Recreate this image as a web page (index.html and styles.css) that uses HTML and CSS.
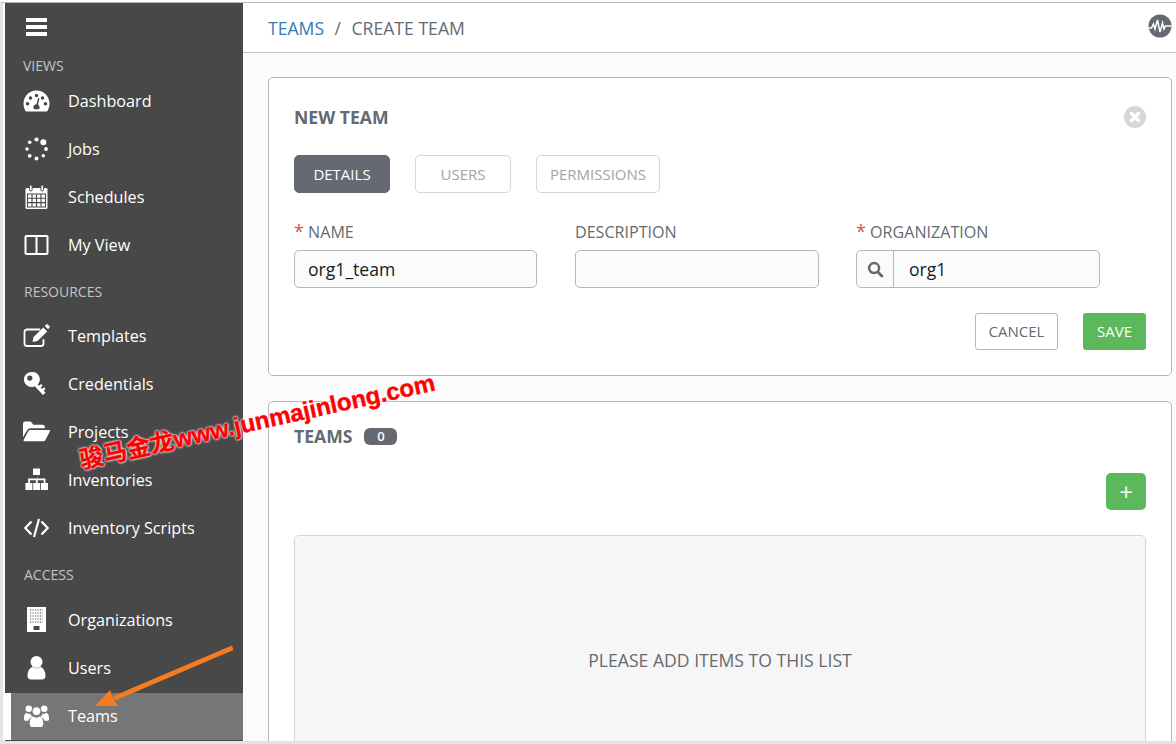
FILE: index.html
```html
<!DOCTYPE html>
<html lang="en">
<head>
  <meta charset="UTF-8">
  <meta name="viewport" content="width=device-width, initial-scale=1.0">
  <title>Teams</title>
  <link rel="stylesheet" href="styles.css">
</head>
<body>
  <div class="frame">
    <aside class="sidebar">
      <div class="burger"><span></span><span></span><span></span></div>

      <div class="nav-head nav-head-views">VIEWS</div>
      <a class="nav-item">
        <svg class="nav-icon" viewBox="0 0 26 20"><path fill="#fff" fill-rule="evenodd" d="M13 0C6 0 .5 5.500.5 12.500c0 2.500.6 4.700 1.800 6.800.2.400.6.700 1.100.700h19.200c.5 0 .9-.3 1.100-.7 1.200-2.100 1.800-4.300 1.800-6.800C25.500 5.500 20 0 13 0zM13 3a1.700 1.700 0 1 1 0 3.400A1.700 1.700 0 0 1 13 3zM7.200 5.400a1.700 1.700 0 1 1 0 3.400 1.700 1.700 0 0 1 0-3.400zM4.400 11a1.700 1.700 0 1 1 0 3.400 1.700 1.700 0 0 1 0-3.400zM21.600 11a1.700 1.700 0 1 1 0 3.400 1.700 1.700 0 0 1 0-3.400zM18.800 5.400a1.700 1.700 0 1 1 0 3.400 1.700 1.700 0 0 1 0-3.400zM15.800 7.300l-1.300 6.300c1 .6 1.500 1.500 1.500 2.500 0 .7-.2 1.300-.6 1.900h-4.800c-.4-.6-.6-1.200-.6-1.900 0-1.600 1.300-2.900 3-2.900l1.500-6.200z"/></svg>
        <span>Dashboard</span>
      </a>
      <a class="nav-item">
        <svg class="nav-icon" viewBox="0 0 26 26" fill="#fff"><circle cx="13" cy="3.500" r="2.100"/><circle cx="19.800" cy="6.200" r="3"/><circle cx="22.500" cy="13" r="1.900"/><circle cx="19.800" cy="19.800" r="1.700"/><circle cx="13" cy="22.500" r="2"/><circle cx="6.200" cy="19.800" r="1.900"/><circle cx="3.500" cy="13" r="1.700"/><circle cx="6.200" cy="6.200" r="1.800"/></svg>
        <span>Jobs</span>
      </a>
      <a class="nav-item">
        <svg class="nav-icon" viewBox="0 0 26 26"><rect x="2" y="4" width="22" height="21" rx="1.500" fill="#fff"/><rect x="6" y="1" width="2.600" height="6" rx="1.300" fill="#fff" stroke="#484848"/><rect x="17.400" y="1" width="2.600" height="6" rx="1.300" fill="#fff" stroke="#484848"/><path stroke="#484848" stroke-width="1.100" fill="none" d="M4 10h18v13H4zM4 14.300h18M4 18.600h18M8.500 10v13M13 10v13M17.500 10v13"/></svg>
        <span>Schedules</span>
      </a>
      <a class="nav-item">
        <svg class="nav-icon" viewBox="0 0 26 26"><path fill="none" stroke="#fff" stroke-width="2" d="M3 4h20a1 1 0 0 1 1 1v16a1 1 0 0 1-1 1H3a1 1 0 0 1-1-1V5a1 1 0 0 1 1-1zM13 4v18"/></svg>
        <span>My View</span>
      </a>

      <div class="nav-head nav-head-resources">RESOURCES</div>
      <a class="nav-item">
        <svg class="nav-icon" viewBox="0 0 26 26"><path fill="none" stroke="#fff" stroke-width="1.800" stroke-linecap="round" d="M20 17v3.500a2.500 2.500 0 0 1-2.500 2.500H3.500A2.500 2.500 0 0 1 1 20.500V9a2.500 2.500 0 0 1 2.500-2.500H16"/><path fill="#fff" d="M19.800 4.500l3.900 3.900L14 18l-5 1 1-5zM21.300 3l1.200-1.200c.6-.6 1.400-.6 2 0l1.200 1.200c.6.600.6 1.400 0 2L24.500 6.200z"/></svg>
        <span>Templates</span>
      </a>
      <a class="nav-item">
        <svg class="nav-icon" viewBox="0 0 26 26"><path fill="#fff" fill-rule="evenodd" d="M8 1a7.500 7.500 0 1 0 3.300 14.200l8.200 8.800 2.500-2.300-1.800-2 1.800-1.700-1.500-1.700-2 1.700-1.400-1.500 2-1.800-1.600-1.700-2 1.800-1.200-1.300A7.500 7.500 0 0 0 8 1zM6.300 4.500a2.600 2.600 0 1 1 0 5.200 2.600 2.600 0 0 1 0-5.200z"/></svg>
        <span>Credentials</span>
      </a>
      <a class="nav-item">
        <svg class="nav-icon" viewBox="0 0 26 22"><path fill="#fff" d="M0 3a2 2 0 0 1 2-2h5.500l2.500 3h9a2 2 0 0 1 2 2v1.500H7a3.500 3.500 0 0 0-3 1.700L0 16zM7 9h18c.8 0 1.200.8.800 1.500l-4.300 8.500a2 2 0 0 1-1.800 1H1.500c-.8 0-1.200-.8-.8-1.500L5.200 10A2 2 0 0 1 7 9z"/></svg>
        <span>Projects</span>
      </a>
      <a class="nav-item">
        <svg class="nav-icon" viewBox="0 0 26 26"><path fill="#fff" d="M9.500 1.500h7v6.500h-2.300v3.500H22v4.500h2.500V23h-7v-7h2.700v-2.700h-6V16h2.500v7h-7v-7h2.700v-2.700h-6V16h2.500v7h-7v-7h2.700v-4.500h9.800V8H9.500z"/></svg>
        <span>Inventories</span>
      </a>
      <a class="nav-item">
        <svg class="nav-icon" viewBox="0 0 26 26"><path fill="none" stroke="#fff" stroke-width="2.200" d="M8 6.500L1.800 13 8 19.500M18 6.500l6.200 6.500-6.200 6.500M15.500 4l-5 18"/></svg>
        <span>Inventory Scripts</span>
      </a>

      <div class="nav-head nav-head-access">ACCESS</div>
      <a class="nav-item">
        <svg class="nav-icon" viewBox="0 0 26 26"><rect x="3.500" y="0" width="19" height="25" fill="#fff"/><path stroke="#484848" stroke-width="1.200" stroke-dasharray="1.200 1.300" fill="none" d="M6.500 3h13M6.500 6h13M6.500 9h13M6.500 12h13M6.500 15h13"/><rect x="10" y="19" width="6" height="4" fill="#484848"/></svg>
        <span>Organizations</span>
      </a>
      <a class="nav-item">
        <svg class="nav-icon" viewBox="0 0 26 26"><circle cx="13" cy="7" r="6" fill="#fff"/><path fill="#fff" d="M4 21c0-5 2.500-9 5.500-9 1 .8 2.200 1.300 3.500 1.300s2.500-.5 3.500-1.300c3 0 5.500 4 5.500 9 0 2.200-1.400 3.500-3.300 3.500H7.300C5.400 24.500 4 23.200 4 21z"/></svg>
        <span>Users</span>
      </a>
      <a class="nav-item nav-item-active">
        <svg class="nav-icon" viewBox="0 0 28 26" fill="#fff"><circle cx="6" cy="5.500" r="3.400"/><circle cx="22" cy="5.500" r="3.400"/><circle cx="14" cy="8" r="4.600" stroke="#767676"/><path d="M1 16c0-3.500.8-6 3-6 .6.500 1.300.8 2.200.8.500 0 1 0 1.500-.3.300 1.400 1 2.600 2 3.300-2.300.9-3.500 2.200-4 4.200H3c-1.200 0-2-.8-2-2zM27 16c0-3.500-.8-6-3-6-.6.500-1.300.8-2.200.8-.5 0-1 0-1.500-.3-.3 1.400-1 2.600-2 3.300 2.300.9 3.500 2.200 4 4.200H25c1.200 0 2-.8 2-2z"/><path d="M7 21c0-4.500 1.500-7.500 3.700-7.500 1 .8 2.100 1.200 3.300 1.200s2.300-.4 3.300-1.200C19.500 13.500 21 16.500 21 21c0 2.200-1.100 3.500-2.800 3.500H9.800C8.100 24.500 7 23.200 7 21z"/></svg>
        <span>Teams</span>
      </a>
    </aside>

    <main class="content">
      <header class="topbar">
        <div class="crumbs"><a class="crumb-link">TEAMS</a><span class="crumb-sep">/</span><span>CREATE TEAM</span></div>
        <svg class="activity" viewBox="0 0 24 24"><circle cx="12" cy="12" r="11.500" fill="#646972"/><path fill="none" stroke="#fff" stroke-width="1.500" d="M0.500 14h3l2-4 1.500 5 2.500-9 2.500 12 2.500-9 1.500 6 1.500-3h6"/></svg>
      </header>

      <div class="panels">
        <section class="panel panel-form">
          <div class="panel-head">
            <h2 class="panel-title">NEW TEAM</h2>
            <svg class="close" viewBox="0 0 22 22"><circle cx="11" cy="11" r="11" fill="#d7d7d7"/><path stroke="#fff" stroke-width="3.400" stroke-linecap="round" d="M7.500 7.500l7 7M14.500 7.500l-7 7"/></svg>
          </div>
          <div class="tabs">
            <a class="tab tab-active tab-details">DETAILS</a>
            <a class="tab tab-users">USERS</a>
            <a class="tab tab-perms">PERMISSIONS</a>
          </div>
          <div class="fields">
            <div class="field">
              <label><span class="req">*</span> NAME</label>
              <div class="input">org1_team</div>
            </div>
            <div class="field">
              <label>DESCRIPTION</label>
              <div class="input"></div>
            </div>
            <div class="field field-org">
              <label><span class="req">*</span> ORGANIZATION</label>
              <div class="input input-lookup">
                <span class="lookup-btn"><svg viewBox="0 0 18 18" width="17" height="17"><circle cx="7.500" cy="7.500" r="5.300" fill="none" stroke="#646972" stroke-width="2.600"/><path stroke="#646972" stroke-width="3" stroke-linecap="round" d="M11.800 11.800l4 4"/></svg></span>
                <span class="lookup-val">org1</span>
              </div>
            </div>
          </div>
          <div class="actions">
            <a class="btn btn-cancel">CANCEL</a>
            <a class="btn btn-save">SAVE</a>
          </div>
        </section>

        <section class="panel panel-list">
          <div class="list-head">
            <h2 class="panel-title">TEAMS</h2>
            <span class="badge">0</span>
          </div>
          <div class="list-tools"><a class="btn-add">+</a></div>
          <div class="empty">PLEASE ADD ITEMS TO THIS LIST</div>
        </section>
      </div>
    </main>
  </div>

  <!-- pasted over the screenshot -->
  <div class="stamp">骏马金龙www.junmajinlong.com</div>
  <svg class="arrow" viewBox="0 0 150 70" width="150" height="70"><path fill="#f57c20" stroke="#f57c20" stroke-width="1.600" stroke-linejoin="round" d="M141.500 3.500L24.400 53.600 25.600 56.400 142.500 6.500z"/><path fill="#f57c20" d="M5 63L20 47l3 8 5 8z"/></svg>
</body>
</html>
```

FILE: styles.css
```css
* {
  box-sizing: border-box;
}

html, body {
  height: 100%;
}

body {
  margin: 0;
  height: 744px;
  overflow: hidden;
  background-color: #fff;
  font-family: 'Open Sans', 'Noto Sans', sans-serif;
  color: #646972;
  position: relative;
}

.frame {
  display: flex;
  height: 742px;
  margin-top: 2px;
  border-top: 1px solid #b7b7b7;
  border-bottom: 3px solid #e4e4e4;
  border-left: 3px solid #e4e4e4;
  padding-left: 2px;
}

/* sidebar */
.sidebar {
  width: 238px;
  flex-shrink: 0;
  background-color: #484848;
  color: #fff;
  overflow: hidden;
}

.burger {
  margin: 15px 0 0 21px;
  width: 21px;
  height: 18px;
  display: flex;
  flex-direction: column;
  justify-content: space-between;
}

.burger span {
  display: block;
  height: 4px;
  background-color: #fff;
}

.nav-head {
  font-size: 14px;
  line-height: 19px;
  color: #c4c4c4;
  padding-left: 18px;
}

.nav-head-views {
  margin-top: 20px;
  margin-bottom: 2px;
}

.nav-head-resources {
  margin-top: 13px;
  margin-bottom: 11px;
  padding-left: 19px;
}

.nav-head-access {
  margin-top: 13px;
  margin-bottom: 12px;
  padding-left: 19px;
}

.nav-item {
  display: flex;
  align-items: center;
  height: 48px;
  font-size: 16.200px;
  color: #fff;
  padding-left: 18px;
}

.nav-icon {
  width: 27px;
  height: 26px;
  flex-shrink: 0;
  margin-right: 18px;
}

.nav-item-active {
  height: 47px;
  margin-top: 1px;
  background-color: #767676;
  border-left: 6px solid #fff;
  padding-left: 12px;
  padding-bottom: 1px;
}

/* main */
.content {
  flex: 1;
  min-width: 0;
  background-color: #fbfbfb;
  display: flex;
  flex-direction: column;
}

.topbar {
  height: 50px;
  flex-shrink: 0;
  background-color: #fff;
  border-bottom: 1px solid #c4c4c4;
  display: flex;
  align-items: center;
  justify-content: space-between;
  padding: 0 4px 0 25px;
}

.crumbs {
  font-size: 17.600px;
  color: #646972;
}

.crumb-link {
  color: #337ab7;
}

.crumb-sep {
  margin: 0 10.500px;
}

.activity {
  width: 24px;
  height: 24px;
  margin-bottom: 4px;
}

.panels {
  flex: 1;
  padding: 24px 4px 0 25px;
  overflow: hidden;
}

.panel {
  background-color: #fff;
  border: 1px solid #b7b7b7;
  border-radius: 5px;
  padding: 0 25px;
}

.panel-form {
  height: 299px;
  margin-bottom: 25px;
}

.panel-list {
  height: 400px;
}

.panel-head {
  display: flex;
  justify-content: space-between;
  align-items: center;
  padding-top: 13px;
  height: 65px;
}

.panel-title {
  margin: 0;
  font-size: 17.600px;
  line-height: 24px;
  font-weight: 700;
  color: #646972;
}

.close {
  width: 22px;
  height: 22px;
}

.tabs {
  display: flex;
  gap: 25px;
  margin-top: 12px;
}

.tab {
  display: flex;
  align-items: center;
  justify-content: center;
  height: 38px;
  padding-bottom: 1px;
  font-size: 15px;
  border: 1px solid #d7d7d7;
  border-radius: 5px;
  color: #a3a3a3;
}

.tab-details {
  width: 96px;
}

.tab-users {
  width: 96px;
}

.tab-perms {
  width: 124px;
}

.tab-active {
  background-color: #646972;
  border-color: #646972;
  color: #fff;
}

.fields {
  display: grid;
  grid-template-columns: 243px 244px 244px;
  column-gap: 38px;
  margin-top: 28px;
}

.field-org {
  margin: 0 1px 0 -1px;
}

.field label {
  display: block;
  font-size: 16.100px;
  line-height: 22px;
  color: #646972;
  margin-bottom: 7px;
}

.req {
  color: #d9534f;
  font-size: 18px;
  line-height: 0;
}

.input {
  display: flex;
  align-items: center;
  height: 38px;
  background-color: #fbfbfb;
  border: 1px solid #b7b7b7;
  border-radius: 5px;
  font-size: 17.600px;
  color: #161b1f;
  padding-left: 13px;
}

.input-lookup {
  padding-left: 0;
}

.lookup-btn {
  display: flex;
  align-items: center;
  justify-content: center;
  width: 37px;
  height: 100%;
  border-right: 1px solid #b7b7b7;
}

.lookup-val {
  padding-left: 15px;
}

.actions {
  display: flex;
  justify-content: flex-end;
  gap: 25px;
  margin-top: 25px;
}

.btn {
  display: flex;
  align-items: center;
  justify-content: center;
  height: 37px;
  padding-bottom: 2px;
  font-size: 15px;
  border-radius: 3px;
}

.btn-cancel {
  width: 83px;
  border: 1px solid #b7b7b7;
  color: #646972;
}

.btn-save {
  width: 63px;
  background-color: #5cb85c;
  color: #fff;
}

.list-head {
  display: flex;
  align-items: center;
  gap: 12px;
  padding-top: 22px;
}

.badge {
  display: flex;
  align-items: center;
  justify-content: center;
  width: 33px;
  height: 17px;
  background-color: #646972;
  border-radius: 6px;
  color: #fff;
  font-size: 13px;
  font-weight: 600;
}

.list-tools {
  display: flex;
  justify-content: flex-end;
  margin-top: 25px;
}

.btn-add {
  display: flex;
  align-items: center;
  justify-content: center;
  width: 40px;
  height: 37px;
  background-color: #5cb85c;
  border-radius: 5px;
  color: #fff;
  font-size: 24px;
}

.empty {
  display: flex;
  align-items: center;
  justify-content: center;
  height: 250px;
  margin-top: 25px;
  background-color: #f6f6f6;
  border: 1px solid #d7d7d7;
  border-radius: 5px;
  font-size: 17.600px;
  color: #646972;
}

/* things drawn over the screenshot */
.stamp {
  position: absolute;
  left: 80px;
  top: 447px;
  transform: rotate(-12.500deg);
  transform-origin: left center;
  font-family: 'Liberation Sans', 'Noto Sans CJK SC', sans-serif;
  font-size: 24px;
  font-weight: 700;
  line-height: 28px;
  white-space: nowrap;
  color: #ff0000;
  -webkit-text-stroke: 0.400px #ff0000;
  text-shadow: 0 0 2px #fff, 0 0 2px #fff, 0 0 3px #fff;
}

.arrow {
  position: absolute;
  left: 90px;
  top: 643px;
}
```
